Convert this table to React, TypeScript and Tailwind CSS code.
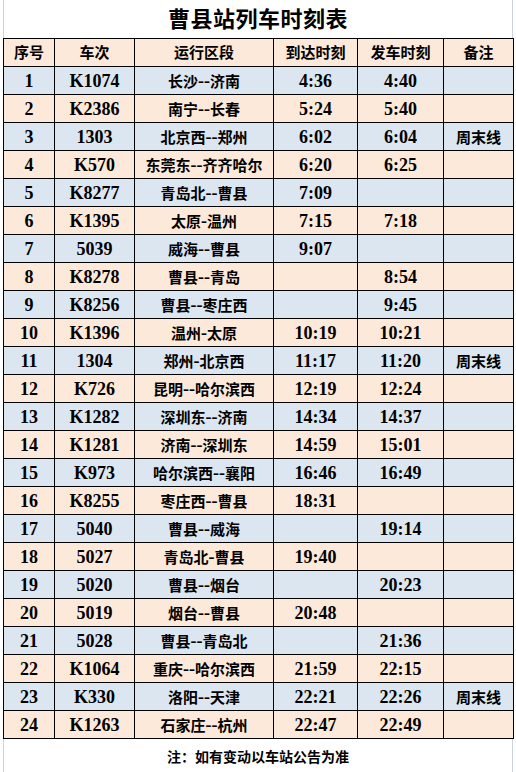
import React from 'react';

type Row = [string, string, string, string, string];

const rows: Row[] = [
  ['K1074', '长沙--济南', '4:36', '4:40', ''],
  ['K2386', '南宁--长春', '5:24', '5:40', ''],
  ['1303', '北京西--郑州', '6:02', '6:04', '周末线'],
  ['K570', '东莞东--齐齐哈尔', '6:20', '6:25', ''],
  ['K8277', '青岛北--曹县', '7:09', '', ''],
  ['K1395', '太原-温州', '7:15', '7:18', ''],
  ['5039', '威海--曹县', '9:07', '', ''],
  ['K8278', '曹县--青岛', '', '8:54', ''],
  ['K8256', '曹县--枣庄西', '', '9:45', ''],
  ['K1396', '温州-太原', '10:19', '10:21', ''],
  ['1304', '郑州-北京西', '11:17', '11:20', '周末线'],
  ['K726', '昆明--哈尔滨西', '12:19', '12:24', ''],
  ['K1282', '深圳东--济南', '14:34', '14:37', ''],
  ['K1281', '济南--深圳东', '14:59', '15:01', ''],
  ['K973', '哈尔滨西--襄阳', '16:46', '16:49', ''],
  ['K8255', '枣庄西--曹县', '18:31', '', ''],
  ['5040', '曹县--威海', '', '19:14', ''],
  ['5027', '青岛北-曹县', '19:40', '', ''],
  ['5020', '曹县--烟台', '', '20:23', ''],
  ['5019', '烟台--曹县', '20:48', '', ''],
  ['5028', '曹县--青岛北', '', '21:36', ''],
  ['K1064', '重庆--哈尔滨西', '21:59', '22:15', ''],
  ['K330', '洛阳--天津', '22:21', '22:26', '周末线'],
  ['K1263', '石家庄--杭州', '22:47', '22:49', ''],
];

const headers = ['序号', '车次', '运行区段', '到达时刻', '发车时刻', '备注'];

const cjk = { fontFamily: "'Noto Sans CJK SC', sans-serif" };

// split the route on its dashes so they come out a little longer, as in the sheet
function Route({ text }: { text: string }) {
  const m = text.match(/^([^-]+)(-+)(.+)$/);
  if (!m) return <>{text}</>;
  return (
    <>
      {m[1]}
      <span className="text-[18px]" style={{ fontFamily: "'Liberation Serif', serif" }}>
        {m[2]}
      </span>
      {m[3]}
    </>
  );
}

export default function App() {
  return (
    <div
      className="w-[516px] h-[772px] bg-white text-black font-bold"
      style={{ fontFamily: "'Liberation Serif', 'Noto Sans CJK SC', serif" }}
    >
      <div className="ml-[3px] w-[510px]">
        {/* title */}
        <div className="h-[38px] border-x border-[#c9d3e3] flex items-center justify-center pb-[4px]">
          <span className="text-[22px] tracking-[0.5px]" style={cjk}>
            曹县站列车时刻表
          </span>
        </div>

        <table className="table-fixed border-collapse w-[510px]">
          <colgroup>
            <col className="w-[51px]" />
            <col className="w-[80px]" />
            <col className="w-[139px]" />
            <col className="w-[84px]" />
            <col className="w-[86px]" />
            <col className="w-[70px]" />
          </colgroup>
          <thead>
            <tr className="h-[28px] bg-[#fde9d9]">
              {headers.map((h) => (
                <th key={h} className="border border-black p-0 text-[15px] font-bold text-center" style={cjk}>
                  {h}
                </th>
              ))}
            </tr>
          </thead>
          <tbody>
            {rows.map((r, i) => (
              <tr key={i} className={i % 2 === 0 ? 'h-[28px] bg-[#dce6f1]' : 'h-[28px] bg-[#fde9d9]'}>
                <td className="border border-black p-0 text-center text-[18px] leading-none">{i + 1}</td>
                <td className="border border-black p-0 text-center text-[18px] leading-none">{r[0]}</td>
                <td className="border border-black p-0 text-center text-[15px] leading-none whitespace-nowrap" style={cjk}>
                  <Route text={r[1]} />
                </td>
                <td className="border border-black p-0 text-center text-[18px] leading-none">{r[2]}</td>
                <td className="border border-black p-0 text-center text-[18px] leading-none">{r[3]}</td>
                <td className="border border-black p-0 text-center text-[15px] leading-none" style={cjk}>
                  {r[4]}
                </td>
              </tr>
            ))}
          </tbody>
        </table>

        {/* footer note */}
        <div className="h-[34px] border-x border-[#c9d3e3] flex items-center justify-center">
          <span className="text-[14px]" style={cjk}>
            注：如有变动以车站公告为准
          </span>
        </div>
      </div>
    </div>
  );
}
